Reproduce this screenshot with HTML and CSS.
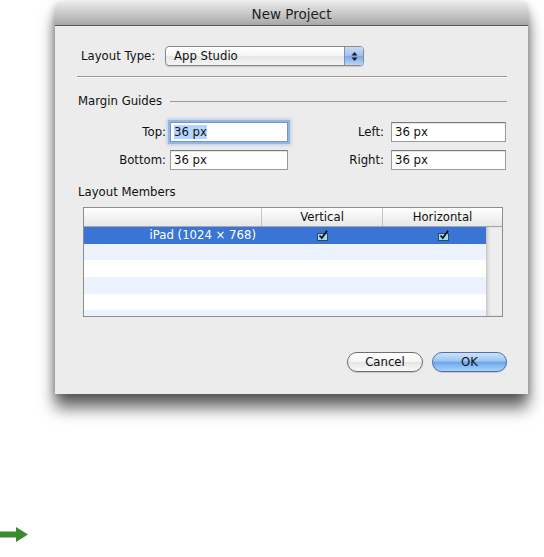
FILE: index.html
```html
<!DOCTYPE html>
<html>
<head>
<meta charset="utf-8">
<link rel="stylesheet" href="styles.css">
</head>
<body>
<div class="page">
  <div class="window">
    <div class="titlebar">New Project</div>
    <div class="content">
      <div class="row-type">
        <span class="label">Layout Type:</span>
        <div class="popup">
          <span class="popup-text">App Studio</span>
          <span class="popup-arrows">
            <svg width="7" height="11" viewBox="0 0 7 11"><path d="M3.5 1 L6.5 4.5 L0.5 4.5 Z" fill="#1a1a2a"/><path d="M3.5 10 L6.5 6.5 L0.5 6.5 Z" fill="#1a1a2a"/></svg>
          </span>
        </div>
      </div>
      <div class="sep"></div>
      <div class="group-head">
        <span>Margin Guides</span>
        <div class="group-line"></div>
      </div>
      <div class="fields">
        <span class="flabel">Top:</span>
        <div class="field focus"><span class="sel">36 px</span></div>
        <span class="flabel">Left:</span>
        <div class="field">36 px</div>
        <span class="flabel">Bottom:</span>
        <div class="field">36 px</div>
        <span class="flabel">Right:</span>
        <div class="field">36 px</div>
      </div>
      <div class="members-head">Layout Members</div>
      <div class="table">
        <div class="thead">
          <div class="th c1"></div>
          <div class="th c2">Vertical</div>
          <div class="th c3">Horizontal</div>
        </div>
        <div class="tbody">
          <div class="rows">
            <div class="tr selected">
              <div class="td c1">iPad (1024 × 768)</div>
              <div class="td c2"><svg class="chk" width="11" height="11" viewBox="0 0 11 11"><rect x="0.5" y="3.5" width="10" height="7" fill="#a6d8ee" stroke="#34485c"/><path d="M2.5 5.5 L4.8 8 L10 0.8" fill="none" stroke="#111" stroke-width="1.8"/></svg></div>
              <div class="td c3"><svg class="chk" width="11" height="11" viewBox="0 0 11 11"><rect x="0.5" y="3.5" width="10" height="7" fill="#a6d8ee" stroke="#34485c"/><path d="M2.5 5.5 L4.8 8 L10 0.8" fill="none" stroke="#111" stroke-width="1.8"/></svg></div>
            </div>
            <div class="tr alt"></div>
            <div class="tr"></div>
            <div class="tr alt"></div>
            <div class="tr"></div>
            <div class="tr alt"></div>
          </div>
          <div class="filler"></div>
        </div>
      </div>
      <div class="buttons">
        <div class="btn cancel">Cancel</div>
        <div class="btn ok">OK</div>
      </div>
    </div>
  </div>
  <div class="arrow">
    <svg width="30" height="18" viewBox="0 0 30 18"><path d="M0 5.5 H16 V1 L28 8.5 L16 16 V11.5 H0 Z" fill="#3a8a2e"/></svg>
  </div>
</div>
</body>
</html>
```
FILE: styles.css
```css
html, body {
  margin: 0;
  padding: 0;
  background: #ffffff;
}
body {
  font-family: "DejaVu Sans", "Liberation Sans", sans-serif;
  font-size: 11.7px;
  color: #111;
  width: 544px;
  height: 557px;
  overflow: hidden;
}
.page {
  padding-top: 2px;
  display: flex;
  flex-direction: column;
}
.window {
  margin-left: 55px;
  width: 473px;
  height: 392px;
  background: #ececec;
  border-radius: 6px 6px 0 0;
  box-shadow: 0 14px 16px rgba(0,0,0,0.6), 0 2px 8px rgba(0,0,0,0.25);
  display: flex;
  flex-direction: column;
  overflow: hidden;
}
.titlebar {
  height: 23px;
  line-height: 24px;
  text-align: center;
  font-size: 13.5px;
  color: #1e1e1e;
  background: linear-gradient(#e9e9e9, #c9c9c9 50%, #a7a7a7);
  border-bottom: 1px solid #555;
  border-radius: 6px 6px 0 0;
}
.content {
  flex: 1;
  padding: 20px 21px 0 22px;
  display: flex;
  flex-direction: column;
}
.row-type {
  display: flex;
  align-items: center;
  height: 20px;
  padding-left: 4px;
}
.row-type .label {
  width: 84px;
}
.popup {
  width: 197px;
  height: 18px;
  border: 1px solid #8a8a8a;
  border-radius: 4px;
  background: linear-gradient(#ffffff, #f4f4f4 50%, #e6e6e6 51%, #f4f4f4);
  display: flex;
  align-items: center;
  overflow: hidden;
  box-shadow: 0 1px 1px rgba(0,0,0,0.15);
}
.popup-text {
  flex: 1;
  padding-left: 8px;
}
.popup-arrows {
  width: 18px;
  height: 18px;
  display: flex;
  align-items: center;
  justify-content: center;
  border-left: 1px solid #7c8fbf;
  background: linear-gradient(#c7dcf6, #9fc0ec 50%, #7ea7e2 51%, #b9d6f7);
}
.sep {
  margin-top: 10px;
  height: 1px;
  background: #9a9a9a;
  border-bottom: 1px solid #fafafa;
}
.group-head {
  margin-top: 15px;
  display: flex;
  align-items: center;
  padding-left: 1px;
  height: 16px;
}
.group-line {
  flex: 1;
  margin-left: 8px;
  height: 1px;
  background: #9a9a9a;
}
.fields {
  margin-top: 13px;
  display: grid;
  grid-template-columns: 89px 118px 92px 118px;
  grid-template-rows: 20px 20px;
  column-gap: 4px;
  row-gap: 8px;
  align-items: center;
}
.fields .field:nth-child(4), .fields .field:nth-child(8) {
  margin-left: 3px;
}
.flabel {
  text-align: right;
}
.field {
  height: 18px;
  line-height: 18px;
  border: 1px solid #9b9b9b;
  border-top-color: #7a7a7a;
  background: #fff;
  padding-left: 3px;
  box-shadow: inset 0 1px 1px rgba(0,0,0,0.12);
}
.field.focus {
  box-shadow: 0 0 0 2px #93b6e4, 0 0 3px 3px rgba(120,160,220,0.45);
  border-color: #7394c9;
}
.sel {
  background: #b5d5ff;
}
.members-head {
  margin-top: 14px;
  padding-left: 1px;
  height: 16px;
  line-height: 16px;
}
.table {
  margin-top: 7px;
  margin-left: 6px;
  width: 418px;
  height: 108px;
  border: 1px solid #8e8e8e;
  background: #fff;
  display: flex;
  flex-direction: column;
}
.thead {
  height: 18px;
  display: flex;
  background: linear-gradient(#ffffff, #f3f3f3 50%, #e7e7e7);
  border-bottom: 1px solid #a6a6a6;
}
.th {
  text-align: center;
  line-height: 19px;
  color: #111;
}
.c1 { width: 177px; }
.c2 { width: 120px; border-left: 1px solid #c4c4c4; }
.c3 { flex: 1; border-left: 1px solid #c4c4c4; }
.tbody {
  flex: 1;
  display: flex;
  overflow: hidden;
}
.rows {
  width: 402px;
  display: flex;
  flex-direction: column;
}
.filler {
  flex: 1;
  background: #eeeeee;
  box-shadow: inset 3px 0 4px -2px rgba(0,0,0,0.25);
}
.tr {
  height: 16.7px;
  flex: none;
  display: flex;
  align-items: center;
}
.tr.alt { background: #edf3fe; }
.tr.selected {
  background: #3a74d6;
  color: #fff;
}
.td.c1 {
  text-align: right;
  padding-right: 5px;
  box-sizing: border-box;
}
.td.c2, .td.c3 {
  border-left: 1px solid transparent;
  display: flex;
  justify-content: center;
}
.td.c2 { width: 120px; }
.td.c3 { width: 104px; flex: none; padding-left: 18px; box-sizing: border-box; }
.chk { display: block; }
.buttons {
  margin-top: 35px;
  display: flex;
  justify-content: flex-end;
  gap: 9px;
  padding-right: 0;
}
.btn {
  height: 18px;
  line-height: 18px;
  border-radius: 10px;
  text-align: center;
}
.cancel {
  width: 74px;
  border: 1px solid #6e6e6e;
  background: linear-gradient(#ffffff, #f4f4f4 50%, #e4e4e4 51%, #fafafa);
  box-shadow: 0 1px 1px rgba(0,0,0,0.15);
}
.ok {
  width: 73px;
  border: 1px solid #4f6fae;
  background: linear-gradient(#cfe3fa, #99c3f1 45%, #6ba6ea 52%, #a9d3fb);
  box-shadow: 0 1px 1px rgba(0,0,0,0.15);
}
.arrow {
  margin-top: 132px;
  height: 18px;
}
.arrow svg { display: block; }
```
